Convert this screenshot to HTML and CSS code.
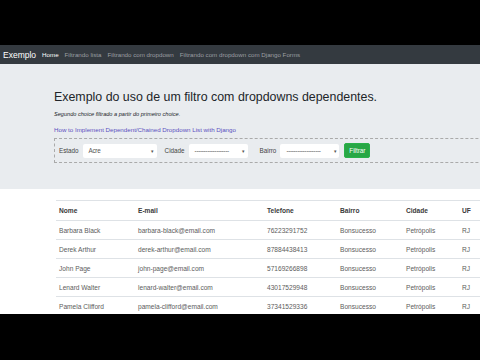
FILE: index.html
```html
<!DOCTYPE html>
<html lang="pt">
<head>
  <meta charset="UTF-8" />
  <title>Exemplo</title>
  <link rel="stylesheet" href="styles.css">
</head>
<body>
  <div class="tela">
    <nav class="navbar">
      <span class="marca">Exemplo</span>
      <a class="nav-link ativo" href="#">Home</a>
      <a class="nav-link" href="#">Filtrando lista</a>
      <a class="nav-link" href="#">Filtrando com dropdown</a>
      <a class="nav-link" href="#">Filtrando com dropdown com Django Forms</a>
    </nav>

    <div class="jumbotron">
      <div class="container">
        <h1>Exemplo do uso de um filtro com dropdowns dependentes.</h1>
        <p class="sub">Segundo choice filtrado a partir do primeiro choice.</p>
        <a class="link" href="#">How to Implement Dependent/Chained Dropdown List with Django</a>

        <form class="filtro">
          <label>Estado</label>
          <div class="select s-estado">Acre<span class="caret">▾</span></div>
          <label>Cidade</label>
          <div class="select s-cidade">-------------------<span class="caret">▾</span></div>
          <label>Bairro</label>
          <div class="select s-bairro">-------------------<span class="caret">▾</span></div>
          <button type="button" class="botao">Filtrar</button>
        </form>
      </div>
    </div>

    <div class="tabela-wrap">
      <table class="tabela">
        <thead>
          <tr><th>Nome</th><th>E-mail</th><th>Telefone</th><th>Bairro</th><th>Cidade</th><th>UF</th></tr>
        </thead>
        <tbody>
          <tr><td>Barbara Black</td><td>barbara-black@email.com</td><td>76223291752</td><td>Bonsucesso</td><td>Petrópolis</td><td>RJ</td></tr>
          <tr><td>Derek Arthur</td><td>derek-arthur@email.com</td><td>87884438413</td><td>Bonsucesso</td><td>Petrópolis</td><td>RJ</td></tr>
          <tr><td>John Page</td><td>john-page@email.com</td><td>57169266898</td><td>Bonsucesso</td><td>Petrópolis</td><td>RJ</td></tr>
          <tr><td>Lenard Walter</td><td>lenard-walter@email.com</td><td>43017529948</td><td>Bonsucesso</td><td>Petrópolis</td><td>RJ</td></tr>
          <tr><td>Pamela Clifford</td><td>pamela-clifford@email.com</td><td>37341529336</td><td>Bonsucesso</td><td>Petrópolis</td><td>RJ</td></tr>
        </tbody>
      </table>
    </div>
  </div>
</body>
</html>
```

FILE: styles.css
```css
body {
  margin: 0;
  background: #000;
  font-family: "Liberation Sans", Arial, sans-serif;
  overflow: hidden;
}

.tela {
  margin-top: 45px;
  height: 269px;
  background: #fff;
  overflow: hidden;
}

.navbar {
  height: 19px;
  background: #343a40;
  display: flex;
  align-items: center;
  padding-left: 3px;
  white-space: nowrap;
}

.marca {
  color: #fff;
  font-size: 8.5px;
  margin-right: 6px;
}

.nav-link {
  color: #9b9ea2;
  font-size: 6.2px;
  text-decoration: none;
  margin-right: 6px;
}

.nav-link.ativo {
  color: #fff;
}

.jumbotron {
  background: #e9ecef;
  height: 125px;
  padding-top: 24px;
  box-sizing: border-box;
}

.container {
  margin-left: 54px;
  width: 600px;
}

h1 {
  margin: 0;
  font-size: 12.4px;
  font-weight: normal;
  color: #212529;
  line-height: 18px;
}

.sub {
  margin: 4px 0 0 0;
  font-size: 5.6px;
  font-style: italic;
  color: #212529;
  line-height: 9px;
}

.link {
  display: block;
  margin-top: 6px;
  font-size: 6.2px;
  color: #5a4fc0;
  text-decoration: none;
  line-height: 9px;
}

.filtro {
  margin-top: 4px;
  border: 1px dashed #aaa;
  border-right: none;
  height: 23px;
  display: flex;
  align-items: center;
  padding-left: 4px;
  font-size: 6.3px;
  color: #444;
}

.filtro label {
  margin-right: 4px;
}

.select {
  position: relative;
  height: 14px;
  line-height: 14px;
  background: #fff;
  border-radius: 2px;
  padding-left: 6px;
  box-sizing: border-box;
  color: #555;
  letter-spacing: -0.3px;
}

.s-estado { width: 74px; margin-right: 8px; }
.s-cidade { width: 59px; margin-right: 12px; }
.s-bairro { width: 59px; margin-right: 5px; }

.caret {
  position: absolute;
  right: 3px;
  top: 0;
  font-size: 5px;
}

.botao {
  background: #28a745;
  color: #fff;
  border: 1px solid #2ab14a;
  border-radius: 2px;
  font-family: inherit;
  font-size: 6.3px;
  height: 15px;
  width: 26px;
  padding: 0;
}

.tabela-wrap {
  margin-left: 56px;
  padding-top: 11px;
}

.tabela {
  border-collapse: collapse;
  table-layout: fixed;
  width: 424px;
  font-size: 6.6px;
  color: #5c5c5c;
}

.tabela th,
.tabela td {
  box-sizing: border-box;
  text-align: left;
  padding: 0 0 0 3px;
  border-top: 1px solid #dee2e6;
  white-space: nowrap;
}

.tabela th {
  height: 20px;
  font-weight: bold;
  color: #3a3a3a;
  border-bottom: 1px solid #dee2e6;
}

.tabela td {
  height: 19px;
}

.tabela th:nth-child(1) { width: 79px; }
.tabela th:nth-child(2) { width: 129px; }
.tabela th:nth-child(3) { width: 73px; }
.tabela th:nth-child(4) { width: 66px; }
.tabela th:nth-child(5) { width: 56px; }
```
